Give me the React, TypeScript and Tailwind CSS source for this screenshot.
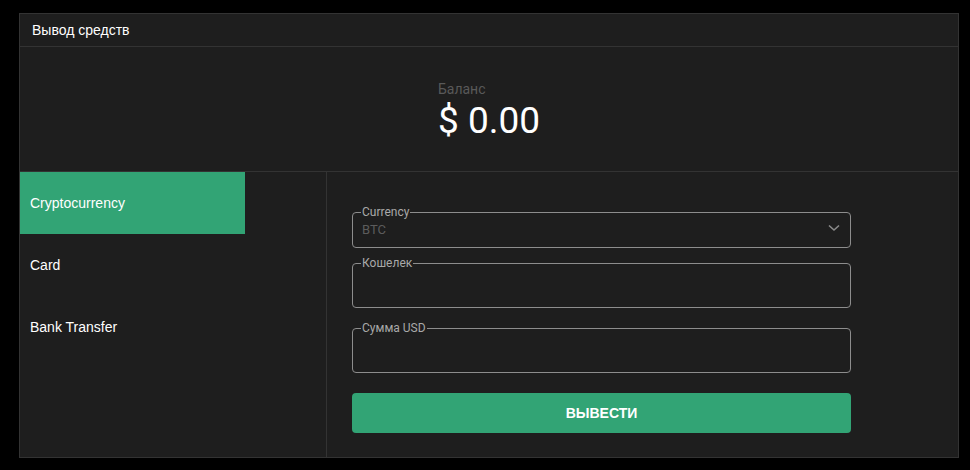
import { useState } from 'react';

const tabs = ['Cryptocurrency', 'Card', 'Bank Transfer'];

function Field({ label, height, children }: { label: string; height: string; children?: React.ReactNode }) {
  return (
    <fieldset className="border border-[#8d8d8d] rounded-[4px] px-[9px]">
      <legend className="ml-[-1px] px-[1px] text-[12px] leading-[14px] text-[#a9a9a9] font-['Roboto',sans-serif]">
        {label}
      </legend>
      <div className={`${height} flex items-center`}>{children}</div>
    </fieldset>
  );
}

export default function App() {
  const [active, setActive] = useState(0);

  return (
    <div className="w-[970px] h-[470px] bg-black pt-[13px] pl-[19px] font-['Liberation_Sans',Arial,sans-serif]">
      <div className="w-[940px] h-[445px] bg-[#1e1e1e] border border-[#333] flex flex-col">
        <div className="h-[33px] border-b border-[#333] flex items-center pl-[12px] text-[14px] text-white">
          Вывод средств
        </div>

        <div className="h-[125px] border-b border-[#333] flex flex-col items-center justify-center">
          <div className="font-['Roboto',sans-serif] pt-[2px]">
            <div className="text-[14px] leading-[20px] text-[#595959]">Баланс</div>
            <div className="text-[37px] leading-[42px] text-white mt-[1px]">$ 0.00</div>
          </div>
        </div>

        <div className="flex flex-1">
          <div className="w-[307px] border-r border-[#333] flex flex-col">
            {tabs.map((t, i) => (
              <button
                key={t}
                onClick={() => setActive(i)}
                className={`w-[225px] h-[62px] flex items-center pl-[10px] text-[14px] text-white text-left ${
                  i === active ? 'bg-[#32a475]' : ''
                }`}
              >
                {t}
              </button>
            ))}
          </div>

          <div className="flex-1 pl-[25px] pt-[33px]">
            <div className="w-[499px] flex flex-col">
              <Field label="Currency" height="h-[28px] pb-[6px]">
                <div className="flex-1 flex items-center justify-between">
                  <span className="text-[13px] text-[#5c5c5c] font-['Roboto',sans-serif]">BTC</span>
                  <svg width="12" height="8" viewBox="0 0 12 8" className="mr-[1px] mb-[4px]">
                    <polyline points="1,1.5 6,6 11,1.5" fill="none" stroke="#8a8a8a" strokeWidth="1.6" />
                  </svg>
                </div>
              </Field>
              <div className="mt-[8px]">
                <Field label="Кошелек" height="h-[37px]" />
              </div>
              <div className="mt-[13px]">
                <Field label="Сумма USD" height="h-[37px]" />
              </div>
              <button className="mt-[20px] h-[40px] rounded-[4px] bg-[#32a475] text-white text-[14px] font-bold">
                ВЫВЕСТИ
              </button>
            </div>
          </div>
        </div>
      </div>
    </div>
  );
}
